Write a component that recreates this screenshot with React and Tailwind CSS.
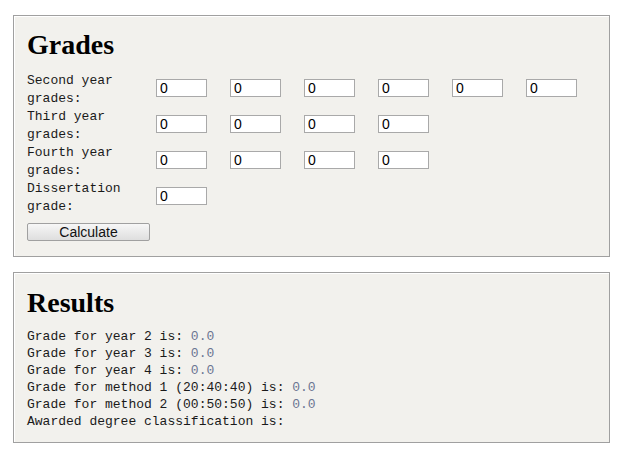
import React, { useState } from 'react';

const mono = { fontFamily: '"Liberation Mono", "Courier New", monospace' };

const rows = [
    { label: ['Second year', 'grades:'], count: 6 },
    { label: ['Third year', 'grades:'], count: 4 },
    { label: ['Fourth year', 'grades:'], count: 4 },
    { label: ['Dissertation', 'grade:'], count: 1 },
];

const Panel = ({ children, className = '' }) => (
    <div
        className={`w-[597px] border border-[#a0a0a0] bg-[#f2f1ed] shadow-[inset_1px_1px_0_#ffffff] pl-[13px] ${className}`}
    >
        {children}
    </div>
);

const Heading = ({ children }) => (
    <h1 className="text-[28px] leading-[32px] font-bold text-black font-['Liberation_Serif','Times_New_Roman',serif]">
        {children}
    </h1>
);

export default function App() {
    const [grades] = useState(rows.map((r) => Array(r.count).fill('0')));

    const results = [
        ['Grade for year 2 is:', '0.0'],
        ['Grade for year 3 is:', '0.0'],
        ['Grade for year 4 is:', '0.0'],
        ['Grade for method 1 (20:40:40) is:', '0.0'],
        ['Grade for method 2 (00:50:50) is:', '0.0'],
        ['Awarded degree classification is:', ''],
    ];

    return (
        <div className="min-h-screen bg-white pt-[15px] pl-[13px]">
            <Panel className="pt-[13px] pb-[15px]">
                <Heading>Grades</Heading>
                <div className="mt-[11px] flex flex-col">
                    {rows.map((row, i) => (
                        <div key={i} className="flex h-[36px] items-start">
                            <div className="w-[129px] text-[13px] leading-[18px] text-[#1a1a1a]" style={mono}>
                                {row.label[0]}
                                <br />
                                {row.label[1]}
                            </div>
                            <div className="mt-[7px] flex gap-[23px]">
                                {grades[i].map((v, j) => (
                                    <input
                                        key={j}
                                        type="text"
                                        defaultValue={v}
                                        className="h-[18px] w-[51px] border border-[#a9a9a9] bg-white px-[3px] text-[14px] leading-[16px] text-black font-['Liberation_Sans',Arial,sans-serif] outline-none"
                                    />
                                ))}
                            </div>
                        </div>
                    ))}
                </div>
                <button
                    type="button"
                    className="mt-[7px] block h-[18px] w-[123px] rounded-[2px] border border-[#a0a0a0] bg-gradient-to-b from-[#f7f7f7] to-[#dedede] text-[14px] leading-[14px] text-[#111] font-['Liberation_Sans',Arial,sans-serif]"
                >
                    Calculate
                </button>
            </Panel>

            <Panel className="mt-[15px] pt-[14px] pb-[12px]">
                <Heading>Results</Heading>
                <div className="mt-[9px] text-[13px] leading-[17px] text-[#1a1a1a]" style={mono}>
                    {results.map(([label, value], i) => (
                        <div key={i} className="whitespace-pre">
                            {label}
                            {value && <span className="text-[#6b7592]"> {value}</span>}
                        </div>
                    ))}
                </div>
            </Panel>
        </div>
    );
}
